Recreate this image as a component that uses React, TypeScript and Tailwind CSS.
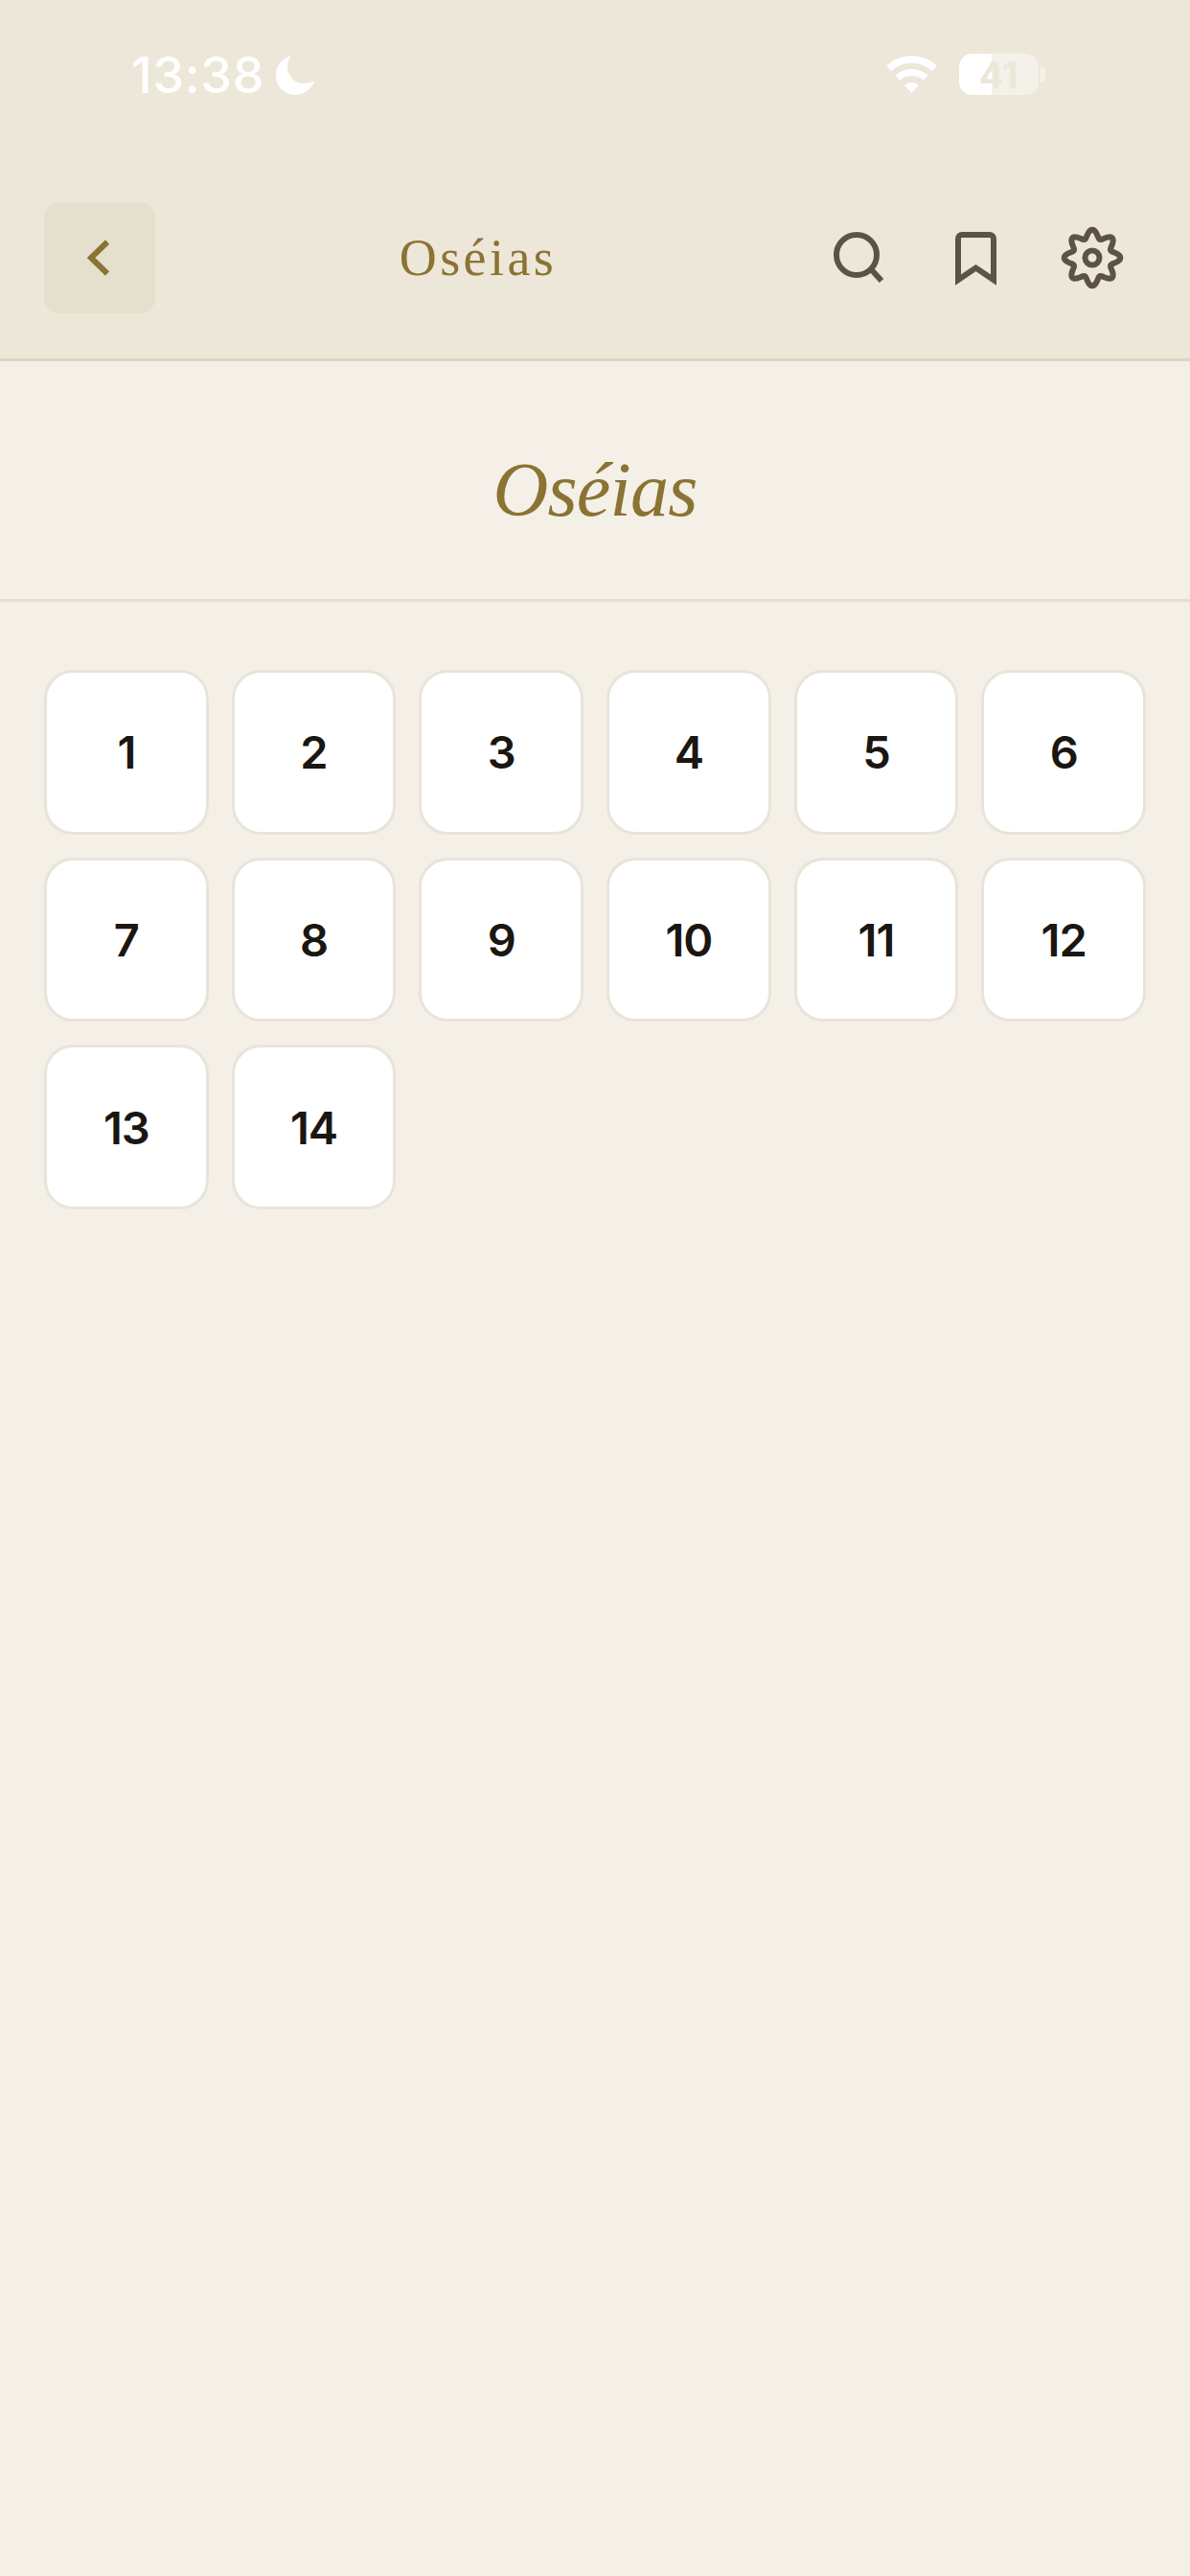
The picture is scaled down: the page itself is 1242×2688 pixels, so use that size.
import React from 'react';

const CHAPTERS = Array.from({ length: 14 }, (_, i) => i + 1);

// wavy outline with 8 lobes, the gear in the header has no match in the icon packs
const gearPath = () => {
  const pts: string[] = [];
  for (let i = 0; i < 160; i++) {
    const a = (i / 160) * Math.PI * 2;
    const r = 25 + 4.3 * Math.cos(8 * a);
    pts.push(`${(33 + r * Math.sin(a)).toFixed(2)} ${(33 - r * Math.cos(a)).toFixed(2)}`);
  }
  return `M${pts.join('L')}Z`;
};

const StatusBar: React.FC = () => (
  <div className="flex h-[211px] items-start justify-between pl-[137px] pr-[151px] pt-[56px]">
    <div className="flex items-start">
      <span className="font-['Inter',sans-serif] text-[52px] font-medium leading-[46px] tracking-[0.8px] text-white">13:38</span>
      <svg className="ml-[12px] mt-[2px]" width="41" height="41" viewBox="0 0 41 41" fill="#fff">
        <path d="M14 1C5 4 0 12 0 21C0 32 9 41 20 41C29 41 37 35 40.5 26.5C37 28 33 29 29 29C19 29 12 21 12 12C12 8 13 4 15.5 1C15 .5 14.5 .7 14 1Z" />
      </svg>
    </div>
    <div className="flex items-start">
      <svg className="mt-[2px]" width="55" height="40" viewBox="0 0 55 40" fill="none" stroke="#fff">
        <path d="M3.6 13.4A35 35 0 0 1 51.4 13.4" strokeWidth="7.5" />
        <path d="M12.8 23.3A21.5 21.5 0 0 1 42.2 23.3" strokeWidth="7" />
        <path d="M27.5 39L20 31A11 11 0 0 1 35 31Z" fill="#fff" stroke="none" />
      </svg>
      <div className="relative ml-[22px] h-[43px] w-[83px] overflow-hidden rounded-[14px] bg-[#f4f1ea]">
        <div className="h-full w-[34px] bg-white" />
        <span className="absolute inset-0 flex items-center justify-center pr-[1px] font-['Inter',sans-serif] text-[38px] font-bold leading-none text-[#ede7d9]">41</span>
      </div>
      <div className="ml-[2px] mt-[14px] h-[16px] w-[5px] rounded-r-full bg-[#f4f1ea]" />
    </div>
  </div>
);

const NavBar: React.FC = () => (
  <div className="flex items-center pb-[47px] pl-[46px] pr-[69px]">
    <button className="flex h-[116px] w-[116px] items-center justify-center rounded-[16px] bg-[#e5dfcd]">
      <svg width="26" height="38" viewBox="0 0 26 38" fill="none" stroke="#8b7333" strokeWidth="6" strokeMiterlimit="10">
        <path d="M21 2.5L4 19L21 35.5" />
      </svg>
    </button>
    <h1 className="flex-1 pr-[27px] text-center font-['Liberation_Serif',serif] text-[54px] leading-[64px] tracking-[3.4px] text-[#8b7333]">Oséias</h1>
    <div className="flex items-center gap-[56px] text-[#5c5346]">
      <svg width="66" height="66" viewBox="0 0 66 66" fill="none" stroke="currentColor" strokeWidth="6">
        <circle cx="31" cy="30" r="21" />
        <path d="M47.5 46.5L57 57" />
      </svg>
      <svg width="66" height="66" viewBox="0 0 66 66" fill="none" stroke="currentColor" strokeWidth="6" strokeMiterlimit="10">
        <path d="M15 56V13a4 4 0 0 1 4-4h29a4 4 0 0 1 4 4V56L33.5 43.5Z" />
      </svg>
      <svg width="66" height="66" viewBox="0 0 66 66" fill="none" stroke="currentColor" strokeWidth="6">
        <path d={gearPath()} />
        <circle cx="33" cy="33" r="7.5" />
      </svg>
    </div>
  </div>
);

const App: React.FC = () => (
  <div className="min-h-[2688px] bg-[#f4f0e8]">
    <header className="border-b-[3px] border-[#ddd5c2] bg-[#ede7d9]">
      <StatusBar />
      <NavBar />
    </header>

    <section className="flex h-[251px] items-center justify-center border-b-[3px] border-[#e5dfcd] pt-[20px]">
      <h2 className="font-['Liberation_Serif',serif] text-[80px] italic leading-none tracking-[-0.8px] text-[#8b7333]">Oséias</h2>
    </section>

    <div className="grid grid-cols-6 gap-[24px] px-[46px] pt-[71px]">
      {CHAPTERS.map(n => (
        <button
          key={n}
          className="flex aspect-square items-center justify-center rounded-[30px] border-[3px] border-[#e8e4d9] bg-white font-['Inter',sans-serif] text-[47px] font-semibold leading-none tracking-[-1px] text-[#1a1612]"
        >
          {n}
        </button>
      ))}
    </div>
  </div>
);

export default App;
